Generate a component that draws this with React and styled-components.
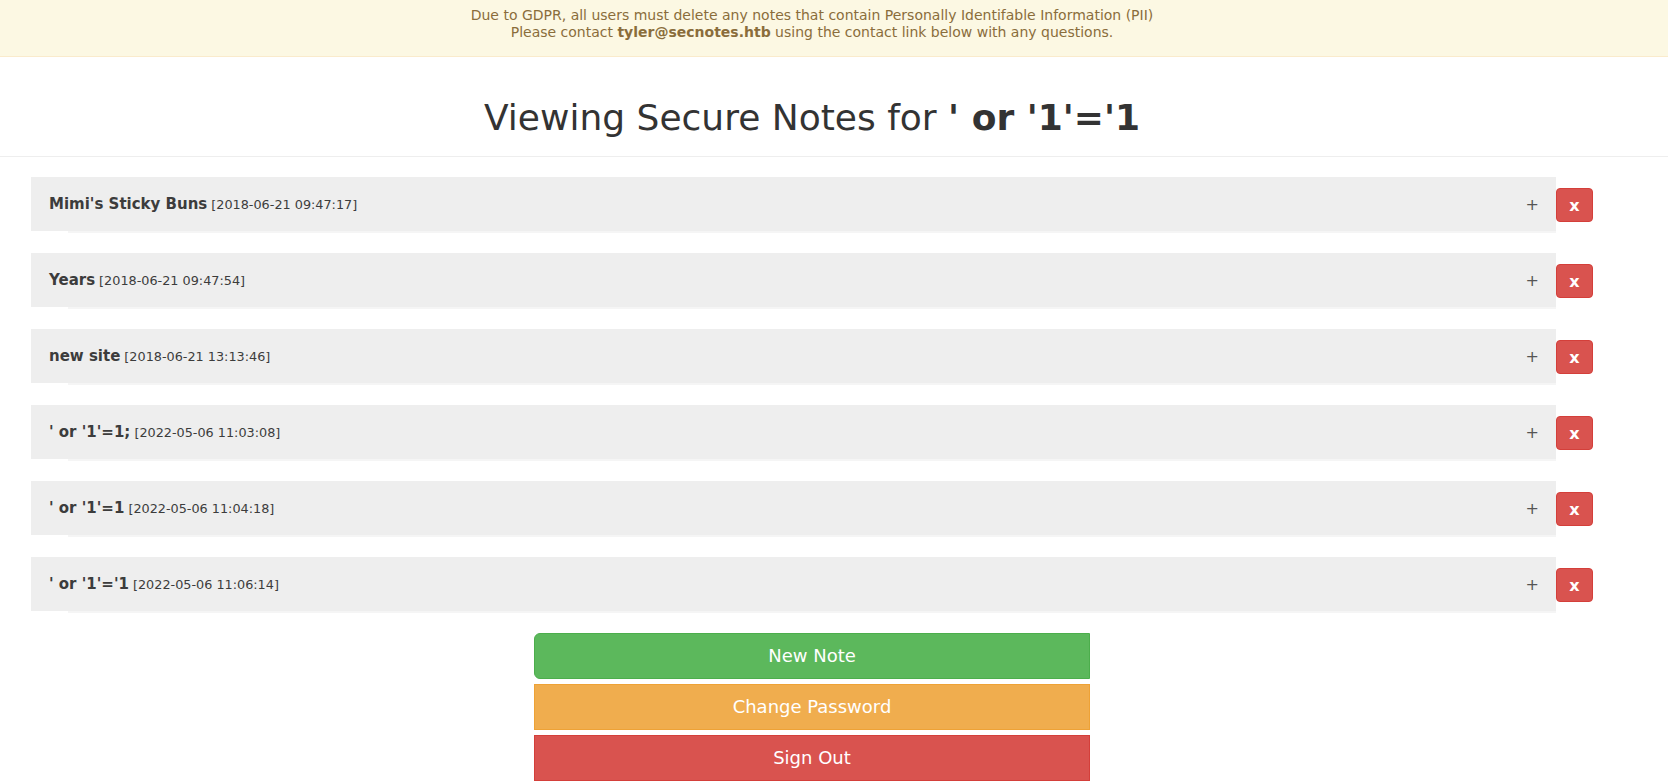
import React from 'react';
import styled, { createGlobalStyle } from 'styled-components';

const GlobalStyle = createGlobalStyle`
    body {
        margin: 0;
        background: #fff;
        color: #333;
        font-family: 'DejaVu Sans', 'Liberation Sans', sans-serif;
    }
`;

const Banner = styled.div`
    background: #fcf8e3;
    border-bottom: 1px solid #faebcc;
    color: #8a6d3b;
    font-size: 14px;
    line-height: 17px;
    padding: 7px 75px 15px 31px;
    text-align: center;
    strong {
        font-weight: bold;
    }
`;

const Header = styled.div`
    padding: 41px 75px 18px 31px;
    border-bottom: 1px solid #eee;
    text-align: center;
`;

const Title = styled.h1`
    margin: 0;
    font-size: 36px;
    font-weight: 400;
    line-height: 40px;
    color: #333;
    strong {
        font-weight: bold;
    }
`;

const Container = styled.div`
    padding: 20px 75px 0 31px;
`;

const NoteList = styled.div`
    display: flex;
    flex-direction: column;
    gap: 20px;
`;

const NoteRow = styled.div`
    display: flex;
    align-items: flex-start;
`;

const NotePanel = styled.div`
    flex: 1;
    display: flex;
    flex-direction: column;
`;

const NoteHeading = styled.div`
    display: flex;
    align-items: center;
    justify-content: space-between;
    height: 54px;
    padding: 0 17px 0 18px;
    background: #eee;
    color: #3c3c3c;
`;

const NoteTitle = styled.span`
    font-size: 15px;
    font-weight: bold;
`;

const NoteDate = styled.small`
    font-size: 12.8px;
    font-weight: normal;
    margin-left: 4px;
`;

const Toggle = styled.span`
    font-size: 16px;
    color: #555;
`;

const NoteShadow = styled.div`
    height: 2px;
    margin-left: 37px;
    background: #f5f5f5;
`;

const DeleteButton = styled.button`
    margin-top: 11px;
    width: 37px;
    height: 34px;
    padding: 0;
    border: 1px solid #d43f3a;
    border-radius: 4px;
    background: #d9534f;
    color: #fff;
    font-family: inherit;
    font-size: 16px;
    font-weight: bold;
`;

const ActionList = styled.div`
    display: flex;
    flex-direction: column;
    align-items: center;
    gap: 5px;
    margin-top: 20px;
`;

const tones = {
    success: { bg: '#5cb85c', border: '#4cae4c', radius: '6px 0 0 6px' },
    warning: { bg: '#f0ad4e', border: '#eea236', radius: '0' },
    danger: { bg: '#d9534f', border: '#d43f3a', radius: '0' },
};

const ActionButton = styled.button`
    width: 556px;
    height: 46px;
    border: 1px solid ${(p) => tones[p.$tone].border};
    border-radius: ${(p) => tones[p.$tone].radius};
    background: ${(p) => tones[p.$tone].bg};
    color: #fff;
    font-family: inherit;
    font-size: 18px;
    line-height: 24px;
`;

const notes = [
    { id: 1, title: "Mimi's Sticky Buns", date: '2018-06-21 09:47:17' },
    { id: 2, title: 'Years', date: '2018-06-21 09:47:54' },
    { id: 3, title: 'new site', date: '2018-06-21 13:13:46' },
    { id: 4, title: "' or '1'=1;", date: '2022-05-06 11:03:08' },
    { id: 5, title: "' or '1'=1", date: '2022-05-06 11:04:18' },
    { id: 6, title: "' or '1'='1", date: '2022-05-06 11:06:14' },
];

function Note({ title, date }) {
    return (
        <NoteRow>
            <NotePanel>
                <NoteHeading>
                    <NoteTitle>
                        {title}
                        <NoteDate>[{date}]</NoteDate>
                    </NoteTitle>
                    <Toggle>+</Toggle>
                </NoteHeading>
                <NoteShadow />
            </NotePanel>
            <DeleteButton>x</DeleteButton>
        </NoteRow>
    );
}

export default function App() {
    return (
        <>
            <GlobalStyle />
            <Banner>
                Due to GDPR, all users must delete any notes that contain Personally Identifable Information (PII)
                <br />
                Please contact <strong>tyler@secnotes.htb</strong> using the contact link below with any questions.
            </Banner>
            <Header>
                <Title>
                    Viewing Secure Notes for <strong>' or '1'='1</strong>
                </Title>
            </Header>
            <Container>
                <NoteList>
                    {notes.map((note) => (
                        <Note key={note.id} {...note} />
                    ))}
                </NoteList>
                <ActionList>
                    <ActionButton $tone="success">New Note</ActionButton>
                    <ActionButton $tone="warning">Change Password</ActionButton>
                    <ActionButton $tone="danger">Sign Out</ActionButton>
                </ActionList>
            </Container>
        </>
    );
}
